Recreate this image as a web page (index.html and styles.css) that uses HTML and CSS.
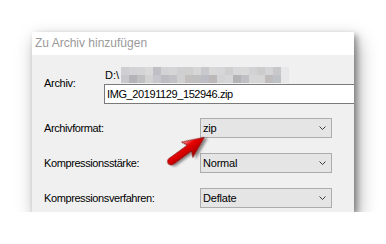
FILE: index.html
```html
<!DOCTYPE html>
<html lang="de">
<head>
    <meta charset="UTF-8">
    <title>Zu Archiv hinzufügen</title>
    <link rel="stylesheet" href="styles.css">
</head>
<body>
    <div class="window">
        <div class="titlebar">Zu Archiv hinzufügen</div>
        <div class="content">
            <div class="archive-row">
                <label class="archive-label">Archiv:</label>
                <div class="archive-field">
                    <div class="path"><span>D:\</span><span class="redacted"></span></div>
                    <div class="textbox">IMG_20191129_152946.zip</div>
                </div>
            </div>

            <div class="options">
                <div class="option-row">
                    <label class="option-label">Archivformat:</label>
                    <div class="combo">
                        <span>zip</span>
                        <svg class="chevron" width="7" height="4" viewBox="0 0 7 4"><polyline points="0.5,0.5 3.5,3.5 6.5,0.5"/></svg>
                    </div>
                </div>
                <div class="option-row">
                    <label class="option-label">Kompressionsstärke:</label>
                    <div class="combo">
                        <span>Normal</span>
                        <svg class="chevron" width="7" height="4" viewBox="0 0 7 4"><polyline points="0.5,0.5 3.5,3.5 6.5,0.5"/></svg>
                    </div>
                </div>
                <div class="option-row">
                    <label class="option-label">Kompressionsverfahren:</label>
                    <div class="combo">
                        <span>Deflate</span>
                        <svg class="chevron" width="7" height="4" viewBox="0 0 7 4"><polyline points="0.5,0.5 3.5,3.5 6.5,0.5"/></svg>
                    </div>
                </div>
            </div>
        </div>

        <!-- annotation arrow pointing at the format box -->
        <svg class="pointer" width="50" height="40" viewBox="0 0 50 40">
            <defs>
                <linearGradient id="arrowFill" x1="0" y1="0" x2="0" y2="1">
                    <stop offset="0" stop-color="#ffa0a0"/>
                    <stop offset="0.35" stop-color="#e80000"/>
                    <stop offset="1" stop-color="#a00000"/>
                </linearGradient>
                <filter id="arrowShadow" x="-30%" y="-30%" width="160%" height="160%">
                    <feDropShadow dx="2" dy="2.5" stdDeviation="1.3" flood-color="#000" flood-opacity="0.45"/>
                </filter>
            </defs>
            <g transform="translate(9,32.5) rotate(-36)" filter="url(#arrowShadow)">
                <path d="M0,3.4 A3.4,3.4 0 0 1 0,-3.4 L23,-3.4 L20,-9.5 L41,0 L20,9.5 L23,3.4 Z"
                      fill="url(#arrowFill)" stroke="#7a0000" stroke-width="0.7" stroke-linejoin="round"/>
            </g>
        </svg>
    </div>
</body>
</html>
```

FILE: styles.css
```css
* {
    box-sizing: border-box;
    margin: 0;
    padding: 0;
}

body {
    background-color: #ffffff;
    padding: 32px 0 0 32px;
    font-family: "Liberation Sans", Arial, sans-serif;
    font-size: 11px;
    color: #000;
}

.window {
    position: relative;
    width: 322px;
    background-color: #f0f0f0;
    overflow: hidden;
    box-shadow: 3px 3px 6px rgba(0,0,0,0.35), 4px 8px 18px rgba(0,0,0,0.35);
}

.titlebar {
    height: 23px;
    line-height: 23px;
    padding-left: 3px;
    background-color: #ffffff;
    color: #9a9a9a;
    font-size: 12px;
}

.content {
    padding: 12px 0 4px 12px;
}

.archive-row {
    display: flex;
}

.archive-label {
    width: 60px;
    padding-top: 9px;
    line-height: 14px;
    letter-spacing: -0.3px;
}

.archive-field {
    flex: 1;
    margin-right: -20px;
}

.path {
    display: flex;
    align-items: center;
    height: 16px;
    padding-left: 1px;
}

.redacted {
    width: 168px;
    height: 16px;
    margin-left: 2px;
    background:
        linear-gradient(to right,
            #cfcfd3 0 8px, #d3d3d5 8px 16px, #d4d4d6 16px 24px, #d9d9d9 24px 32px,
            #bfbfc5 32px 40px, #d3d3d5 40px 48px, #d5d5d7 48px 56px, #cfcfd1 56px 64px,
            #cfcfcf 64px 72px, #d6d6d6 72px 80px, #c9c9cd 80px 88px, #d8d8d8 88px 96px,
            #d6d6d8 96px 104px, #cfcfcf 104px 112px, #d8d8da 112px 120px, #d9d9d9 120px 128px,
            #d2d2d4 128px 136px, #cccccc 136px 144px, #d4d4d6 144px 152px, #c8c8ca 152px 160px,
            #e8e8ea 160px 168px) top / 100% 8px no-repeat,
        linear-gradient(to right,
            #c8c8cc 0 8px, #b4b4b6 8px 16px, #c0c0c2 16px 24px, #d2d2d2 24px 32px,
            #c6c6cc 32px 40px, #bcbcc2 40px 48px, #c2c2c6 48px 56px, #d0d0d0 56px 64px,
            #c4bfbf 64px 72px, #c0c0c0 72px 80px, #bcbcc4 80px 88px, #bcb8b8 88px 96px,
            #d3d3d5 96px 104px, #d6d6d8 104px 112px, #b4b4b6 112px 120px, #c0c0c4 120px 128px,
            #d6d6d6 128px 136px, #d6d6d6 136px 144px, #c0bcbc 144px 152px, #bec2c6 152px 160px,
            #e8e8e8 160px 168px) bottom / 100% 8px no-repeat;
}

.textbox {
    height: 20px;
    margin-top: 1px;
    padding-left: 2px;
    line-height: 18px;
    background-color: #ffffff;
    border: 1px solid #7a7a7a;
    letter-spacing: -0.4px;
}

.options {
    display: flex;
    flex-direction: column;
    gap: 15px;
    margin-top: 14px;
}

.option-row {
    display: flex;
    align-items: center;
}

.option-label {
    width: 156px;
    letter-spacing: -0.4px;
}

.combo {
    display: flex;
    justify-content: space-between;
    align-items: center;
    width: 132px;
    height: 20px;
    padding: 0 5px 0 2px;
    background-color: #e5e5e5;
    border: 1px solid #adadad;
    letter-spacing: -0.2px;
}

.chevron polyline {
    fill: none;
    stroke: #3c3c3c;
    stroke-width: 1;
}

.pointer {
    position: absolute;
    left: 130px;
    top: 97px;
}
```
